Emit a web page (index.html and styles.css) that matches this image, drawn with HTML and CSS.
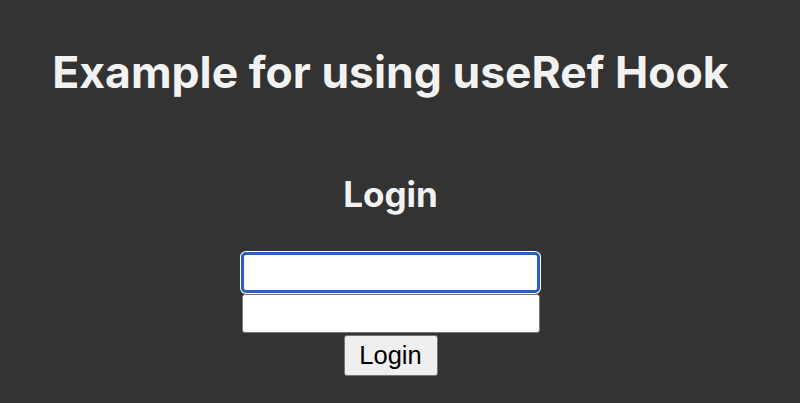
FILE: index.html
```html
<!DOCTYPE html>
<html>
<head>
<meta charset="utf-8">
<link rel="stylesheet" href="styles.css">
</head>
<body>
<div class="app">
  <h1 class="title">Example for using useRef Hook</h1>
  <h2 class="subtitle">Login</h2>
  <form class="form">
    <input class="field field-focus" type="text">
    <input class="field field-second" type="password">
    <button class="btn" type="button">Login</button>
  </form>
</div>
</body>
</html>
```

FILE: styles.css
```css
html, body {
  margin: 0;
  padding: 0;
  background: #333333;
}
.app {
  width: 781px;
  text-align: center;
  color: #f2f2f2;
  font-family: Inter, "Noto Sans", sans-serif;
}
.title {
  margin: 0;
  padding-top: 46px;
  font-size: 44.5px;
  font-weight: 700;
  line-height: 53px;
}
.subtitle {
  margin: 0;
  padding-top: 74px;
  font-size: 35px;
  font-weight: 700;
  line-height: 42px;
}
.form {
  display: flex;
  flex-direction: column;
  align-items: center;
  padding-top: 37px;
}
.field {
  box-sizing: border-box;
  width: 298px;
  height: 39px;
  margin: 0;
  border: 1px solid #767676;
  border-radius: 3px;
  background: #fff;
  font-size: 20px;
  font-family: "Liberation Sans", Arial, sans-serif;
}
.field-focus {
  border: 3px solid #2c5fbd;
  border-radius: 5px;
  box-shadow: 0 0 0 1px #ffffff;
  height: 41px;
  width: 299px;
  outline: none;
}
.field-second {
  margin-top: 1px;
}
.btn {
  box-sizing: border-box;
  margin-top: 2px;
  width: 94px;
  height: 41px;
  border: 1px solid #767676;
  border-radius: 3px;
  background: #efefef;
  color: #000;
  font-size: 25.5px;
  font-family: "Liberation Sans", Arial, sans-serif;
  padding: 0;
}
```
